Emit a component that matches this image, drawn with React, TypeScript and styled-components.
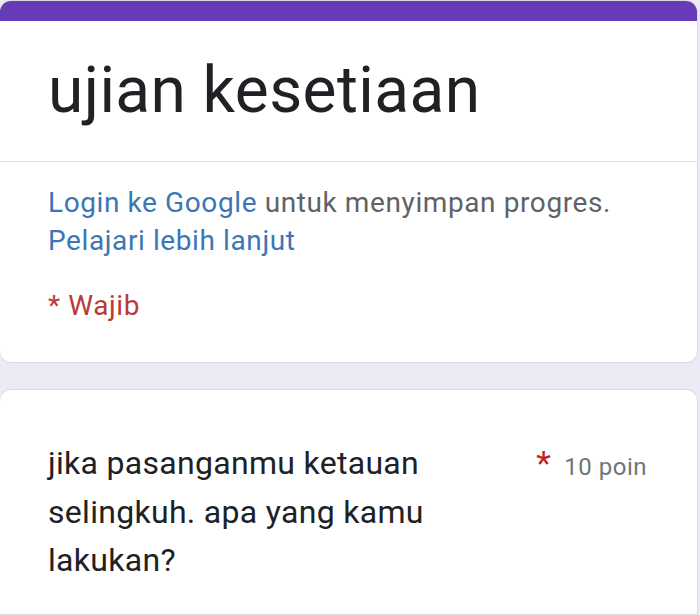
import styled, { createGlobalStyle } from "styled-components";

const Global = createGlobalStyle`
  html, body {
    margin: 0;
    padding: 0;
    background: #ede9f5;
    font-family: Roboto, "Noto Sans", Arial, sans-serif;
  }
`;

const Page = styled.div`
  display: flex;
  flex-direction: column;
  gap: 26px;
  padding-right: 2px;
  margin-left: -1px;
  height: 615px;
  overflow: hidden;
`;

const Card = styled.section`
  background: #fff;
  border: 1px solid #dadce0;
  border-radius: 12px;
  overflow: hidden;
`;

const Accent = styled.div`
  height: 20px;
  background: #673ab7;
`;

const TitleBlock = styled.div`
  padding: 30px 48px 30px;
  border-bottom: 1px solid #e3e3e6;
`;

const Title = styled.h1`
  margin: 0;
  font-size: 64px;
  line-height: 80px;
  font-weight: 400;
  letter-spacing: 0.4px;
  color: #202124;
`;

const Info = styled.div`
  padding: 22px 48px 37px;
  font-size: 28px;
  line-height: 38px;
  letter-spacing: 0.6px;
  color: #5f6368;
`;

const Link = styled.a`
  color: #3b76b6;
  text-decoration: none;
`;

const Required = styled.div`
  margin-top: 27px;
  color: #b93a36;
`;

const QuestionCard = styled(Card)`
  padding: 49px 50px 40px 48px;
  flex: 1;
  border-bottom-left-radius: 0;
  border-bottom-right-radius: 0;
`;

const QuestionRow = styled.div`
  display: flex;
  align-items: flex-start;
  justify-content: space-between;
  gap: 24px;
`;

const Question = styled.div`
  width: 400px;
  font-size: 32px;
  line-height: 48.5px;
  letter-spacing: 0.3px;
  color: #202124;
`;

const Points = styled.div`
  display: flex;
  align-items: baseline;
  gap: 13px;
  font-size: 24px;
  line-height: 48px;
  letter-spacing: 0.5px;
  color: #70757a;
  white-space: nowrap;
`;

const Star = styled.span`
  color: #c5221f;
  font-size: 34px;
`;

export default function App() {
  return (
    <>
      <Global />
      <Page>
        <Card>
          <Accent />
          <TitleBlock>
            <Title>ujian kesetiaan</Title>
          </TitleBlock>
          <Info>
            <Link href="#">Login ke Google</Link> untuk menyimpan progres.
            <br />
            <Link href="#">Pelajari lebih lanjut</Link>
            <Required>* Wajib</Required>
          </Info>
        </Card>
        <QuestionCard>
          <QuestionRow>
            <Question>jika pasanganmu ketauan selingkuh. apa yang kamu lakukan?</Question>
            <Points>
              <Star>*</Star>
              10 poin
            </Points>
          </QuestionRow>
        </QuestionCard>
      </Page>
    </>
  );
}
